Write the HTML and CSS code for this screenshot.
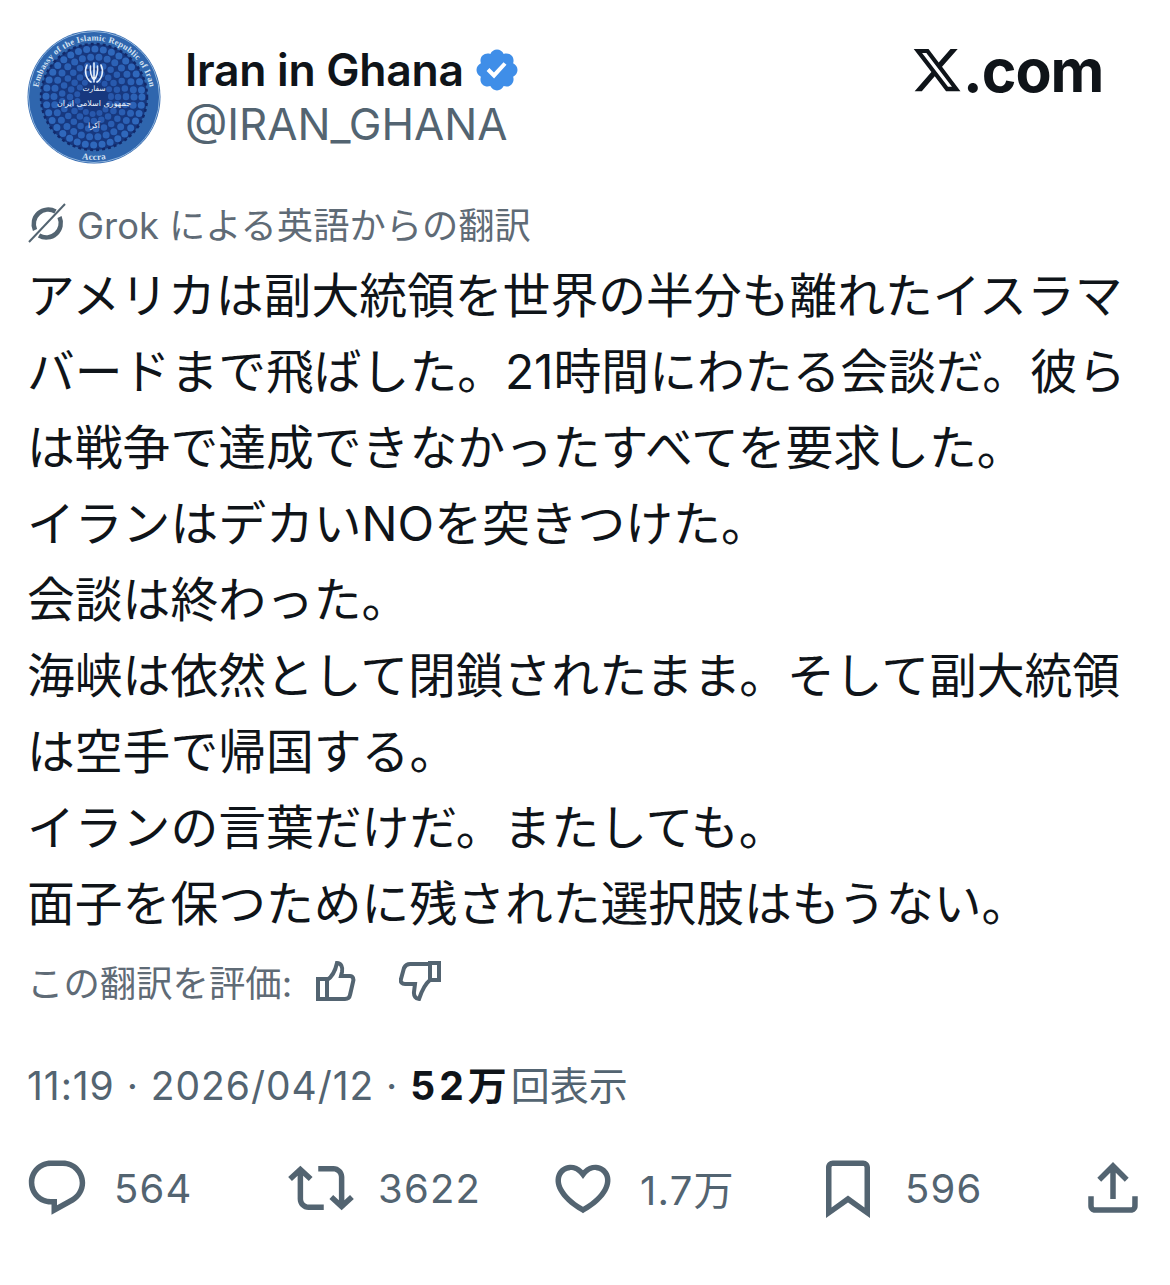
FILE: index.html
```html
<!DOCTYPE html>
<html lang="ja">
<head>
<meta charset="utf-8">
<title>Iran in Ghana</title>
<link rel="stylesheet" href="styles.css">
</head>
<body>
<main class="post">
  <header class="head">
    <svg class="avatar" viewBox="0 0 134 134" aria-hidden="true">
      <defs>
        <path id="arcTop" d="M10.500 67a56.500 56.500 0 0 1 113 0"/>
        <path id="arcBot" d="M45 126a62 62 0 0 0 44 0"/>
      </defs>
      <circle cx="67" cy="67" r="66.500" fill="#2f66ae"/>
      <circle cx="67" cy="67" r="65.500" fill="none" stroke="#8fb4dc" stroke-width="1"/>
      <circle cx="67" cy="67" r="53" fill="#17387f"/>
      <circle cx="67" cy="67" r="48" class="dots d1"/>
      <circle cx="67" cy="67" r="40" class="dots d2"/>
      <circle cx="67" cy="67" r="32" class="dots d3"/>
      <circle cx="67" cy="67" r="24" class="dots d4"/>
      <circle cx="67" cy="67" r="17" class="dots d5"/>
      <circle cx="67" cy="67" r="53" fill="none" stroke="#12296a" stroke-width="2.500" stroke-dasharray="3 3"/>
      <text class="ring"><textPath href="#arcTop" startOffset="50%" text-anchor="middle">Embassy of the Islamic Republic of Iran</textPath></text>
      <text class="ring accra"><textPath href="#arcBot" startOffset="50%" text-anchor="middle">Accra</textPath></text>
      <g class="emblem">
        <path d="M67 33v19M63.500 36c-.5 5 0 10 3.500 14 3.500-4 4-9 3.500-14M60 35c-3 6-1 14 4 17M74 35c3 6 1 14-4 17"/>
      </g>
      <text class="fa fa-s" x="67" y="61" text-anchor="middle">سفارت</text>
      <text class="fa fa-m" x="67" y="76" text-anchor="middle">جمهوری اسلامی ایران</text>
      <text class="fa fa-s" x="67" y="98" text-anchor="middle">آکرا</text>
    </svg>
    <div class="who">
      <div class="name-row">
        <span class="name">Iran in Ghana</span>
        <svg class="badge" viewBox="0 0 24 24" aria-hidden="true">
          <circle cx="12" cy="12" r="6" fill="#fff"/>
          <path fill="#3f8ee8" d="M22.250 12c0-1.430-.880-2.670-2.190-3.340.460-1.390.2-2.900-.810-3.910s-2.520-1.270-3.910-.810c-.660-1.310-1.910-2.190-3.340-2.190s-2.670.880-3.330 2.190c-1.400-.460-2.910-.2-3.920.810s-1.260 2.520-.8 3.910c-1.310.670-2.200 1.910-2.200 3.340s.890 2.670 2.200 3.340c-.460 1.390-.210 2.900.8 3.910s2.520 1.260 3.910.810c.670 1.310 1.910 2.190 3.340 2.190s2.680-.880 3.340-2.190c1.390.450 2.900.2 3.910-.810s1.270-2.520.810-3.910c1.310-.670 2.190-1.910 2.190-3.340zm-11.710 4.200L6.800 12.460l1.410-1.420 2.260 2.260 4.800-5.230 1.470 1.360-6.200 6.770z"/>
        </svg>
      </div>
      <div class="handle">@IRAN_GHANA</div>
    </div>
    <div class="brand">
      <svg class="x-logo" viewBox="0 0 24 24" aria-hidden="true">
        <path d="M18.244 2.250h3.308l-7.227 8.260 8.502 11.240H16.170l-5.214-6.817L4.990 21.750H1.680l7.730-8.835L1.254 2.250H8.080l4.713 6.231zm-1.161 17.520h1.833L7.084 4.126H5.117z"/>
      </svg><span class="brand-text">.com</span>
    </div>
  </header>

  <div class="translated">
    <svg class="grok" viewBox="0 0 40 40" aria-hidden="true">
      <path class="grok-ring" d="M28.500 8.500A14.500 14.500 0 0 0 8 27M12 32.500A14.500 14.500 0 0 0 32.500 14"/>
      <path class="grok-slash" d="M38 1 2 39"/>
    </svg>
    <span>Grok による英語からの翻訳</span>
  </div>

  <p class="body">アメリカは副大統領を世界の半分も離れたイスラマ<br>バードまで飛ばした。21時間にわたる会談だ。彼ら<br>は戦争で達成できなかったすべてを要求した。<br>イランはデカいNOを突きつけた。<br>会談は終わった。<br>海峡は依然として閉鎖されたまま。そして副大統領<br>は空手で帰国する。<br>イランの言葉だけだ。またしても。<br>面子を保つために残された選択肢はもうない。</p>

  <div class="rate">
    <span>この翻訳を評価:</span>
    <svg class="thumb" viewBox="0 0 44 44" aria-hidden="true">
      <path d="M4 20h9v20H4zM13 21c5-3 8-8 10-17 4 0 6 4 5 9l-1 4h9c3 0 4 3 3 6l-3 13c-.5 3-2 4-5 4H13"/>
    </svg>
    <svg class="thumb thumb-down" viewBox="0 0 44 44" aria-hidden="true">
      <path d="M40 4v17h-9V4zM31 5H11C8 5 6 7 5 9l-3 11c-1 3 1 5 4 5h10l-1 8c-.5 4 2 7 5 7 3-9 6-15 11-19"/>
    </svg>
  </div>

  <div class="meta"><span class="stamp">11:19 · 2026/04/12 · </span><b class="views">52万</b><span>回表示</span></div>

  <footer class="stats">
    <div class="stat">
      <svg class="ico" viewBox="0 0 24 24" aria-hidden="true"><path d="M1.751 10c0-4.420 3.584-8 8.005-8h4.366c4.490 0 8.129 3.640 8.129 8.130 0 2.960-1.607 5.680-4.196 7.110l-8.054 4.460v-3.690h-.067c-4.490.1-8.183-3.510-8.183-8.010zm8.005-6c-3.317 0-6.005 2.690-6.005 6 0 3.370 2.770 6.080 6.138 6.010l.351-.010h1.761v2.300l5.087-2.810c1.951-1.080 3.163-3.130 3.163-5.360 0-3.390-2.744-6.130-6.129-6.130H9.756z"/></svg>
      <span>564</span>
    </div>
    <div class="stat">
      <svg class="ico" viewBox="0 0 24 24" aria-hidden="true"><path d="M4.500 3.880l4.432 4.140-1.364 1.460L5.500 7.550V16c0 1.100.896 2 2 2H13v2H7.500c-2.209 0-4-1.790-4-4V7.550L1.432 9.480.068 8.020 4.500 3.880zM16.500 6H11V4h5.500c2.209 0 4 1.790 4 4v8.450l2.068-1.930 1.364 1.460-4.432 4.140-4.432-4.140 1.364-1.460 2.068 1.930V8c0-1.100-.896-2-2-2z"/></svg>
      <span>3622</span>
    </div>
    <div class="stat">
      <svg class="ico" viewBox="0 0 24 24" aria-hidden="true"><path d="M16.697 5.500c-1.222-.060-2.679.510-3.890 2.160l-.805 1.090-.806-1.090C9.984 6.010 8.526 5.440 7.304 5.500c-1.243.070-2.349.780-2.910 1.910-.552 1.120-.633 2.780.479 4.820 1.074 1.970 3.257 4.270 7.129 6.610 3.870-2.340 6.052-4.640 7.126-6.610 1.111-2.040 1.030-3.700.477-4.820-.561-1.130-1.666-1.840-2.908-1.910zm4.187 7.690c-1.351 2.480-4.001 5.120-8.379 7.670l-.503.3-.504-.3c-4.379-2.550-7.029-5.190-8.382-7.670-1.360-2.500-1.410-4.860-.514-6.670.887-1.790 2.647-2.910 4.601-3.010 1.651-.090 3.368.560 4.798 2.010 1.429-1.450 3.146-2.100 4.796-2.010 1.954.1 3.714 1.220 4.601 3.010.896 1.810.846 4.170-.514 6.670z"/></svg>
      <span>1.7万</span>
    </div>
    <div class="stat">
      <svg class="ico" viewBox="0 0 24 24" aria-hidden="true"><path d="M4 4.500C4 3.120 5.119 2 6.500 2h11C18.881 2 20 3.120 20 4.500v18.440l-8-5.710-8 5.710V4.500zM6.500 4c-.276 0-.5.220-.5.500v14.560l6-4.290 6 4.290V4.500c0-.280-.224-.5-.5-.5h-11z"/></svg>
      <span>596</span>
    </div>
    <div class="stat">
      <svg class="ico" viewBox="0 0 24 24" aria-hidden="true"><path d="M12 2.590l5.700 5.700-1.410 1.420L13 6.410V16h-2V6.410l-3.300 3.300-1.410-1.420L12 2.590zM21 15l-.020 3.510c0 1.380-1.120 2.490-2.500 2.490H5.500C4.110 21 3 19.880 3 18.500V15h2v3.500c0 .280.220.5.500.5h12.980c.280 0 .5-.220.5-.5L19 15h2z"/></svg>
    </div>
  </footer>
</main>
</body>
</html>
```
FILE: styles.css
```css
* { box-sizing: border-box; }
html, body { margin: 0; background: #fff; }
body {
  width: 1170px;
  height: 1285px;
  overflow: hidden;
  font-family: Inter, "Noto Sans CJK JP", sans-serif;
  color: #0f1419;
}
.post { padding: 30px 0 0 27px; }

.head { display: flex; align-items: flex-start; }
.avatar { width: 134px; height: 134px; flex: none; }
.dots { fill: none; stroke-linecap: round; }
.d1 { stroke: #2f68bc; stroke-width: 7; stroke-dasharray: 0 8.400; }
.d2 { stroke: #2c62b6; stroke-width: 7; stroke-dasharray: 0 8.400; }
.d3 { stroke: #2a5eb2; stroke-width: 6.500; stroke-dasharray: 0 8; }
.d4 { stroke: #285aae; stroke-width: 6.500; stroke-dasharray: 0 7.500; }
.d5 { stroke: #2858ac; stroke-width: 6; stroke-dasharray: 0 7; }
.ring { font: 700 8.500px "Liberation Serif", serif; fill: #d5e3f3; letter-spacing: .3px; }
.accra { font-size: 9px; }
.emblem path { fill: none; stroke: #e8f0fa; stroke-width: 1.600; stroke-linecap: round; }
.fa { font-family: "DejaVu Sans", sans-serif; fill: #eef4fb; }
.fa-s { font-size: 7.500px; }
.fa-m { font-size: 8px; }

.who { margin: 13px 0 0 24px; width: 726px; flex: none; }
.name-row { display: flex; align-items: center; gap: 9px; height: 54px; }
.name { font-size: 44.500px; font-weight: 600; letter-spacing: -.3px; }
.badge { width: 48px; height: 48px; }
.handle { font-size: 43.800px; line-height: 55px; color: #536471; }

.brand { display: flex; align-items: center; height: 56px; margin-top: 12px; }
.x-logo { width: 52px; height: 52px; fill: #0f1419; }
.brand-text { font-size: 59px; font-weight: 700; letter-spacing: -1px; }

.translated {
  display: flex;
  align-items: center;
  gap: 10px;
  margin-top: 37px;
  height: 44px;
  font-size: 36.300px;
  color: #5f6b76;
}
.grok { width: 40px; height: 40px; flex: none; }
.grok-ring { fill: none; stroke: #536471; stroke-width: 4.500; }
.grok-slash { fill: none; stroke: #536471; stroke-width: 2; }

.body {
  margin: 13px 0 0;
  font-size: 47.800px;
  line-height: 76px;
  white-space: nowrap;
}

.rate {
  display: flex;
  align-items: center;
  margin-top: 17px;
  height: 44px;
  font-size: 36.400px;
  color: #5f6b76;
}
.thumb { width: 44px; height: 44px; fill: none; stroke: #536471; stroke-width: 4; margin-left: 22px; }
.thumb-down { margin-left: 41px; }

.meta {
  margin-top: 59px;
  height: 48px;
  line-height: 48px;
  font-size: 39px;
  color: #536471;
  white-space: nowrap;
}
.stamp { letter-spacing: .95px; }
.views { color: #0f1419; font-weight: 700; letter-spacing: 4px; }

.stats {
  display: grid;
  grid-template-columns: 264px 262px 265px 265px auto;
  margin: 45px 0 0 -3px;
}
.stat { display: flex; align-items: center; gap: 24px; font-size: 40px; letter-spacing: 1.200px; color: #536471; }
.ico { width: 66px; height: 66px; fill: #536471; flex: none; }
```
